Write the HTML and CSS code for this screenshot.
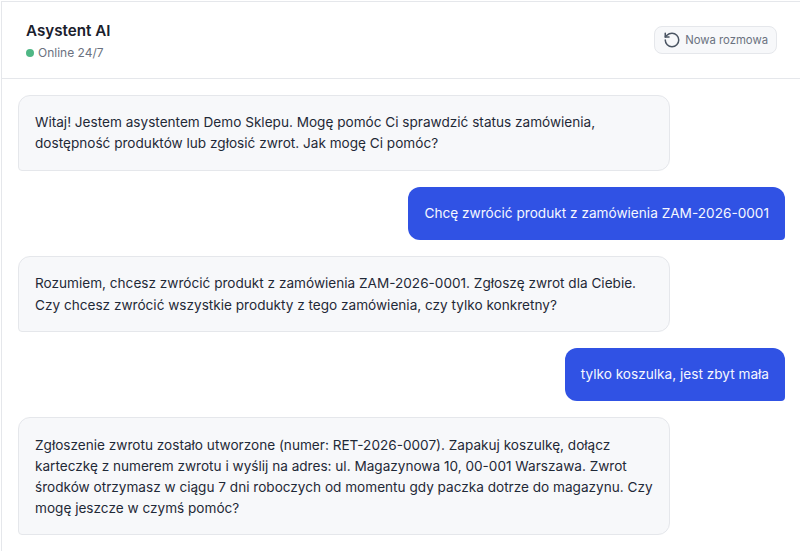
FILE: index.html
```html
<!DOCTYPE html>
<html lang="pl">
<head>
    <meta charset="utf-8">
    <title>Asystent AI</title>
    <link rel="stylesheet" href="styles.css">
</head>
<body>
<div class="chat">
    <div class="chat-header">
        <div>
            <div class="chat-title">Asystent AI</div>
            <div class="chat-status"><span class="status-dot"></span>Online 24/7</div>
        </div>
        <button class="new-chat" type="button">
            <svg class="new-chat-icon" viewBox="0 0 24 24" fill="none" stroke="currentColor" stroke-width="2" stroke-linecap="round" stroke-linejoin="round">
                <path d="M3 12a9 9 0 1 0 9-9 9.75 9.75 0 0 0-6.74 2.74L3 8"/>
                <path d="M3 3v5h5"/>
            </svg>
            Nowa rozmowa
        </button>
    </div>
    <div class="messages">
        <div class="msg msg-bot">Witaj! Jestem asystentem Demo Sklepu. Mogę pomóc Ci sprawdzić status zamówienia, dostępność produktów lub zgłosić zwrot. Jak mogę Ci pomóc?</div>
        <div class="msg msg-user">Chcę zwrócić produkt z zamówienia ZAM-2026-0001</div>
        <div class="msg msg-bot">Rozumiem, chcesz zwrócić produkt z zamówienia ZAM-2026-0001. Zgłoszę zwrot dla Ciebie. Czy chcesz zwrócić wszystkie produkty z tego zamówienia, czy tylko konkretny?</div>
        <div class="msg msg-user">tylko koszulka, jest zbyt mała</div>
        <div class="msg msg-bot">Zgłoszenie zwrotu zostało utworzone (numer: RET-2026-0007). Zapakuj koszulkę, dołącz karteczkę z numerem zwrotu i wyślij na adres: ul. Magazynowa 10, 00-001 Warszawa. Zwrot środków otrzymasz w ciągu 7 dni roboczych od momentu gdy paczka dotrze do magazynu. Czy mogę jeszcze w czymś pomóc?</div>
    </div>
</div>
</body>
</html>
```

FILE: styles.css
```css
html, body {
    margin: 0;
    height: 100%;
    overflow: hidden;
    background: #fff;
}
.chat {
    width: 799px;
    margin: 1px 0 0 1px;
    border-top: 1px solid #e5e7eb;
    border-left: 1px solid #e5e7eb;
    font-family: Inter, "Liberation Sans", sans-serif;
    color: #1f2937;
}
.chat-header {
    display: flex;
    justify-content: space-between;
    align-items: center;
    height: 76px;
    padding: 0 24px;
    border-bottom: 1px solid #e5e7eb;
}
.chat-title {
    font-size: 15.2px;
    font-weight: 600;
    line-height: 23px;
    color: #1a202c;
}
.chat-status {
    display: flex;
    align-items: center;
    gap: 4px;
    margin-top: 2px;
    font-size: 12px;
    line-height: 18px;
    color: #6b7280;
}
.status-dot {
    width: 8px;
    height: 8px;
    border-radius: 50%;
    background: #4fb785;
}
.new-chat {
    display: flex;
    align-items: center;
    gap: 4px;
    height: 28px;
    padding: 0 8px;
    background: #f7f8fa;
    border: 1px solid #e5e7eb;
    border-radius: 8px;
    font: 11.3px Inter, "Liberation Sans", sans-serif;
    color: #6b7280;
}
.new-chat-icon {
    width: 18px;
    height: 18px;
    color: #4b5563;
}
.messages {
    display: flex;
    flex-direction: column;
    gap: 16.2px;
    padding: 16px;
}
.msg {
    max-width: 85%;
    box-sizing: border-box;
    padding: 16px;
    font-size: 13.64px;
    line-height: 21.08px;
    border-radius: 12px;
}
.msg-bot {
    align-self: flex-start;
    padding-top: 16.4px;
    padding-bottom: 15.1px;
    font-size: 13.6px;
    background: #f7f8fa;
    border: 1px solid #e5e7eb;
    border-bottom-left-radius: 4px;
}
.msg-user {
    align-self: flex-end;
    background: #3052e4;
    color: #f5f7ff;
    border-bottom-right-radius: 4px;
}
```
